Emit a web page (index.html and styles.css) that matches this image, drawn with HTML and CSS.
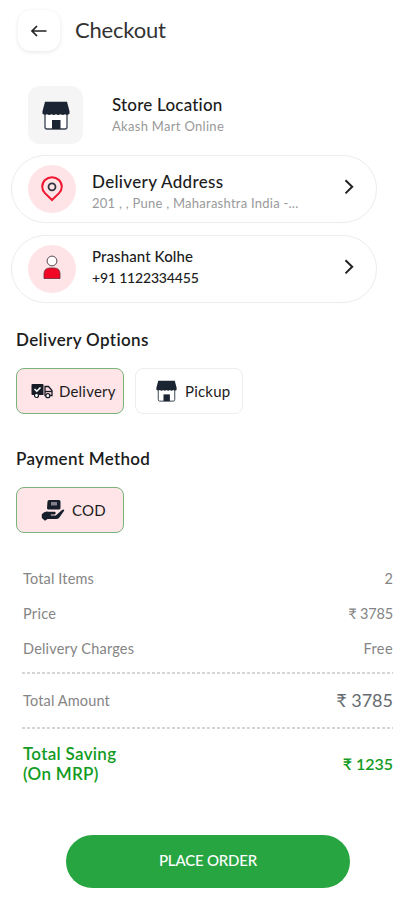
FILE: index.html
```html
<!DOCTYPE html>
<html lang="en">
<head>
<meta charset="utf-8">
<meta name="viewport" content="width=device-width, initial-scale=1">
<title>Checkout</title>
<link rel="stylesheet" href="styles.css">
</head>
<body>
<svg width="0" height="0" class="defs" aria-hidden="true">
  <symbol id="shop" viewBox="0 0 28 29">
    <path d="M3 11v15q0 2 2 2h18q2 0 2-2V11z" fill="#fff" stroke="#3a4350" stroke-width="1.300"/>
    <path d="M3 .8h22l2.500 9.500v2.500q-2.200 2-4.500.5-2.200 1.500-4.500 0-2.300 1.500-4.500 0-2.300 1.500-4.500 0-2.300 1.500-4.500 0Q2.500 14.500 .5 12.800v-2.500z" fill="#1b2432"/>
    <path d="M10 28v-9h8.500v9z" fill="#1b2432"/>
  </symbol>
  <symbol id="chevron" viewBox="0 0 10 16">
    <path d="M1.500 1.200L8.200 7.800 1.500 14.400" fill="none" stroke="#222" stroke-width="2"/>
  </symbol>
</svg>
<main class="screen">
  <header class="header">
    <button class="back" aria-label="Back">
      <svg width="18" height="14" viewBox="0 0 18 14"><path d="M16.500 7H2M7 2L2 7 7 12" fill="none" stroke="#222" stroke-width="1.700"/></svg>
    </button>
    <h1 class="title">Checkout</h1>
  </header>

  <section class="store">
    <div class="store-tile"><svg width="28" height="29"><use href="#shop"/></svg></div>
    <div class="text">
      <div class="store-name">Store Location</div>
      <div class="store-sub">Akash Mart Online</div>
    </div>
  </section>

  <section class="card">
    <div class="bubble">
      <svg width="22" height="26" viewBox="0 0 22 26"><path d="M11 24L4.200 17.400Q1.200 14.300 1.200 10.800A9.800 9.500 0 0 1 20.800 10.800Q20.800 14.300 17.800 17.400Z" fill="none" stroke="#ef1730" stroke-width="2"/><circle cx="11" cy="10.800" r="3.500" fill="none" stroke="#30323d" stroke-width="1.800"/></svg>
    </div>
    <div class="text address">
      <div class="address-name">Delivery Address</div>
      <div class="address-sub">201 , , Pune , Maharashtra India -...</div>
    </div>
    <svg class="chevron" width="10" height="16"><use href="#chevron"/></svg>
  </section>

  <section class="card">
    <div class="bubble">
      <svg class="user" width="18" height="25" viewBox="0 0 18 25"><circle cx="9" cy="6" r="4.900" fill="#fff" stroke="#55474e" stroke-width="1"/><path d="M1 23.500V19q0-6 6-6h4q6 0 6 6v4.500z" fill="#f00825" stroke="#6b2733" stroke-width=".8"/></svg>
    </div>
    <div class="text contact">
      <div class="person">Prashant Kolhe</div>
      <div class="phone">+91 1122334455</div>
    </div>
    <svg class="chevron" width="10" height="16"><use href="#chevron"/></svg>
  </section>

  <h2 class="heading delivery-heading">Delivery Options</h2>
  <div class="options">
    <button class="option selected">
      <svg class="truck" width="22" height="16" viewBox="0 0 22 16"><path d="M1.500 1h10q1 0 1 1v10H1.500q-1 0-1-1V2q0-1 1-1z" fill="#171b25"/><path d="M14 3.500h3.500l3.500 4v5h-7z" fill="#fbd9de" stroke="#171b25" stroke-width="1.300"/><path d="M14 8.500h7" stroke="#171b25" stroke-width="1.300"/><circle cx="5.500" cy="12.500" r="2" fill="#fff" stroke="#171b25" stroke-width="1.200"/><circle cx="16.800" cy="12.700" r="2" fill="#fff" stroke="#171b25" stroke-width="1.200"/><path d="M3.500 6l2.300 2.300L9.500 4.500" fill="none" stroke="#fff" stroke-width="1.500"/></svg>
      <span class="delivery-label">Delivery</span>
    </button>
    <button class="option pickup">
      <svg width="21" height="22"><use href="#shop"/></svg>
      <span class="pickup-label">Pickup</span>
    </button>
  </div>

  <h2 class="heading payment-heading">Payment Method</h2>
  <div class="options cod-options">
    <button class="option selected cod">
      <svg width="24" height="22" viewBox="0 0 24 22"><path d="M8 1h10q1.500 0 1.500 1.500V9q0 1.500-1.500 1.500H7.500Q6 10.500 6 9l.5-6.500Q6.600 1 8 1z" fill="#161e2b"/><path d="M10 3h6v3.500h-6z" fill="#81808b"/><path d="M.8 15.300Q4 11.300 8 12.800h6q1.700 1.500-.5 2.800H9.800v1h5L21 11q2-1 2.300.5L18 19q-1 1-3 1H6.500L4 21.800.8 19z" fill="#161e2b"/></svg>
      <span class="cod-label">COD</span>
    </button>
  </div>

  <section class="summary">
    <div class="row"><span class="l-items">Total Items</span><span>2</span></div>
    <div class="row"><span class="l-price">Price</span><span class="v-price">₹ 3785</span></div>
    <div class="row"><span class="l-charges">Delivery Charges</span><span class="v-free">Free</span></div>
    <div class="dash"></div>
    <div class="row total"><span class="l-amount">Total Amount</span><span class="v-total">₹ 3785</span></div>
    <div class="dash"></div>
    <div class="row saving"><span class="l-saving">Total Saving<br>(On MRP)</span><span class="v-saving">₹ 1235</span></div>
  </section>

  <button class="place"><span>PLACE ORDER</span></button>
</main>
</body>
</html>
```
FILE: styles.css
```css
* { box-sizing: border-box; }
body { margin: 0; background: #fff; color: #1c1c1c; font-family: Lato, "Noto Sans", sans-serif; }
button { font: inherit; color: inherit; padding: 0; margin: 0; border: 0; background: #fff; }
svg { display: block; flex: none; }
h1, h2 { margin: 0; }
.defs { position: absolute; }
.screen { height: 900px; overflow: hidden; display: flex; flex-direction: column; }
.screen > * { flex: none; }
.header { display: flex; align-items: center; gap: 15px; padding: 10px 0 0 18px; height: 51px; }
.back { width: 42px; height: 41px; border-radius: 13px; display: flex; align-items: center; justify-content: center; box-shadow: 0 1px 4px rgba(0,0,0,.1); }
.title { font-size: 22px; font-weight: 400; line-height: 28px; letter-spacing: -.2px; color: #333; padding-bottom: 1px; }

.store { display: flex; margin: 35px 0 11px 28px; height: 58px; gap: 29px; align-items: center; }
.store-tile { width: 55px; height: 58px; border-radius: 12px; background: #f5f5f5; display: flex; align-items: center; justify-content: center; }
.text { white-space: nowrap; }
.store-name, .address-name { font-size: 17px; line-height: 22px; font-weight: 500; letter-spacing: .2px; }
.address-name { letter-spacing: .33px; }
.store-sub, .address-sub { font-size: 13px; line-height: 20px; color: #999; letter-spacing: .3px; }
.address-sub { letter-spacing: .25px; }
.address { padding-top: 5px; }

.card { width: 366px; height: 68px; margin: 0 0 12px 11px; border: 1px solid #ececec; border-radius: 34px; display: flex; align-items: center; padding: 0 22px 0 16px; gap: 16px; }
.bubble { width: 48px; height: 48px; border-radius: 50%; background: #ffe4e7; display: flex; align-items: center; justify-content: center; flex: none; }
.user { margin-bottom: 3px; }
.chevron { margin: 0 0 4px auto; }
.person, .phone { font-size: 14px; line-height: 21px; font-weight: 500; }
.person { font-size: 15px; letter-spacing: .1px; }
.phone { letter-spacing: -.18px; }
.contact { padding-bottom: 4px; }

.heading { font-size: 17px; font-weight: 600; line-height: 24px; margin-left: 16px; white-space: nowrap; align-self: flex-start; letter-spacing: .37px; }
.delivery-heading { margin-top: 13px; }
.payment-heading { margin-top: 33px; letter-spacing: .3px; }
.options { display: flex; gap: 11px; margin: 16px 0 0 16px; }
.option { width: 108px; height: 46px; border-radius: 8px; border: 1px solid #eee; display: flex; align-items: center; gap: 8px; font-size: 15px; white-space: nowrap; letter-spacing: .2px; }
.selected { background: #ffe5e8; border-color: #79b57b; padding-left: 14px; gap: 6px; }
.pickup { padding-left: 20px; }
.cod { padding-left: 24px; gap: 7px; }

.summary { margin: 28px 22px 0 22px; }
.row { display: flex; justify-content: space-between; align-items: center; height: 35px; font-size: 14.500px; color: #858585; white-space: nowrap; padding-left: 1px; }
.l-items, .l-amount { letter-spacing: .15px; }
.l-price { letter-spacing: .3px; }
.l-charges { letter-spacing: .2px; }
.v-price { letter-spacing: -.15px; }
.v-free { letter-spacing: .4px; }
.dash { height: 2px; margin-top: 6px; background: repeating-linear-gradient(90deg, #d5d5d5 0 3px, transparent 3px 5px); }
.total { height: 52px; margin-bottom: -5px; }
.v-total { font-size: 18px; color: #666b70; }
.saving { height: 40px; margin-top: 15px; color: #129b22; font-size: 16px; font-weight: 600; line-height: 20px; }
.l-saving { font-size: 17px; letter-spacing: .3px; }
.place { width: 284px; height: 53px; margin: 51px 0 0 66px; border-radius: 27px; background: #27a541; color: #fff; font-size: 15px; font-weight: 500; white-space: nowrap; letter-spacing: -.2px; padding-bottom: 3px; }
```
